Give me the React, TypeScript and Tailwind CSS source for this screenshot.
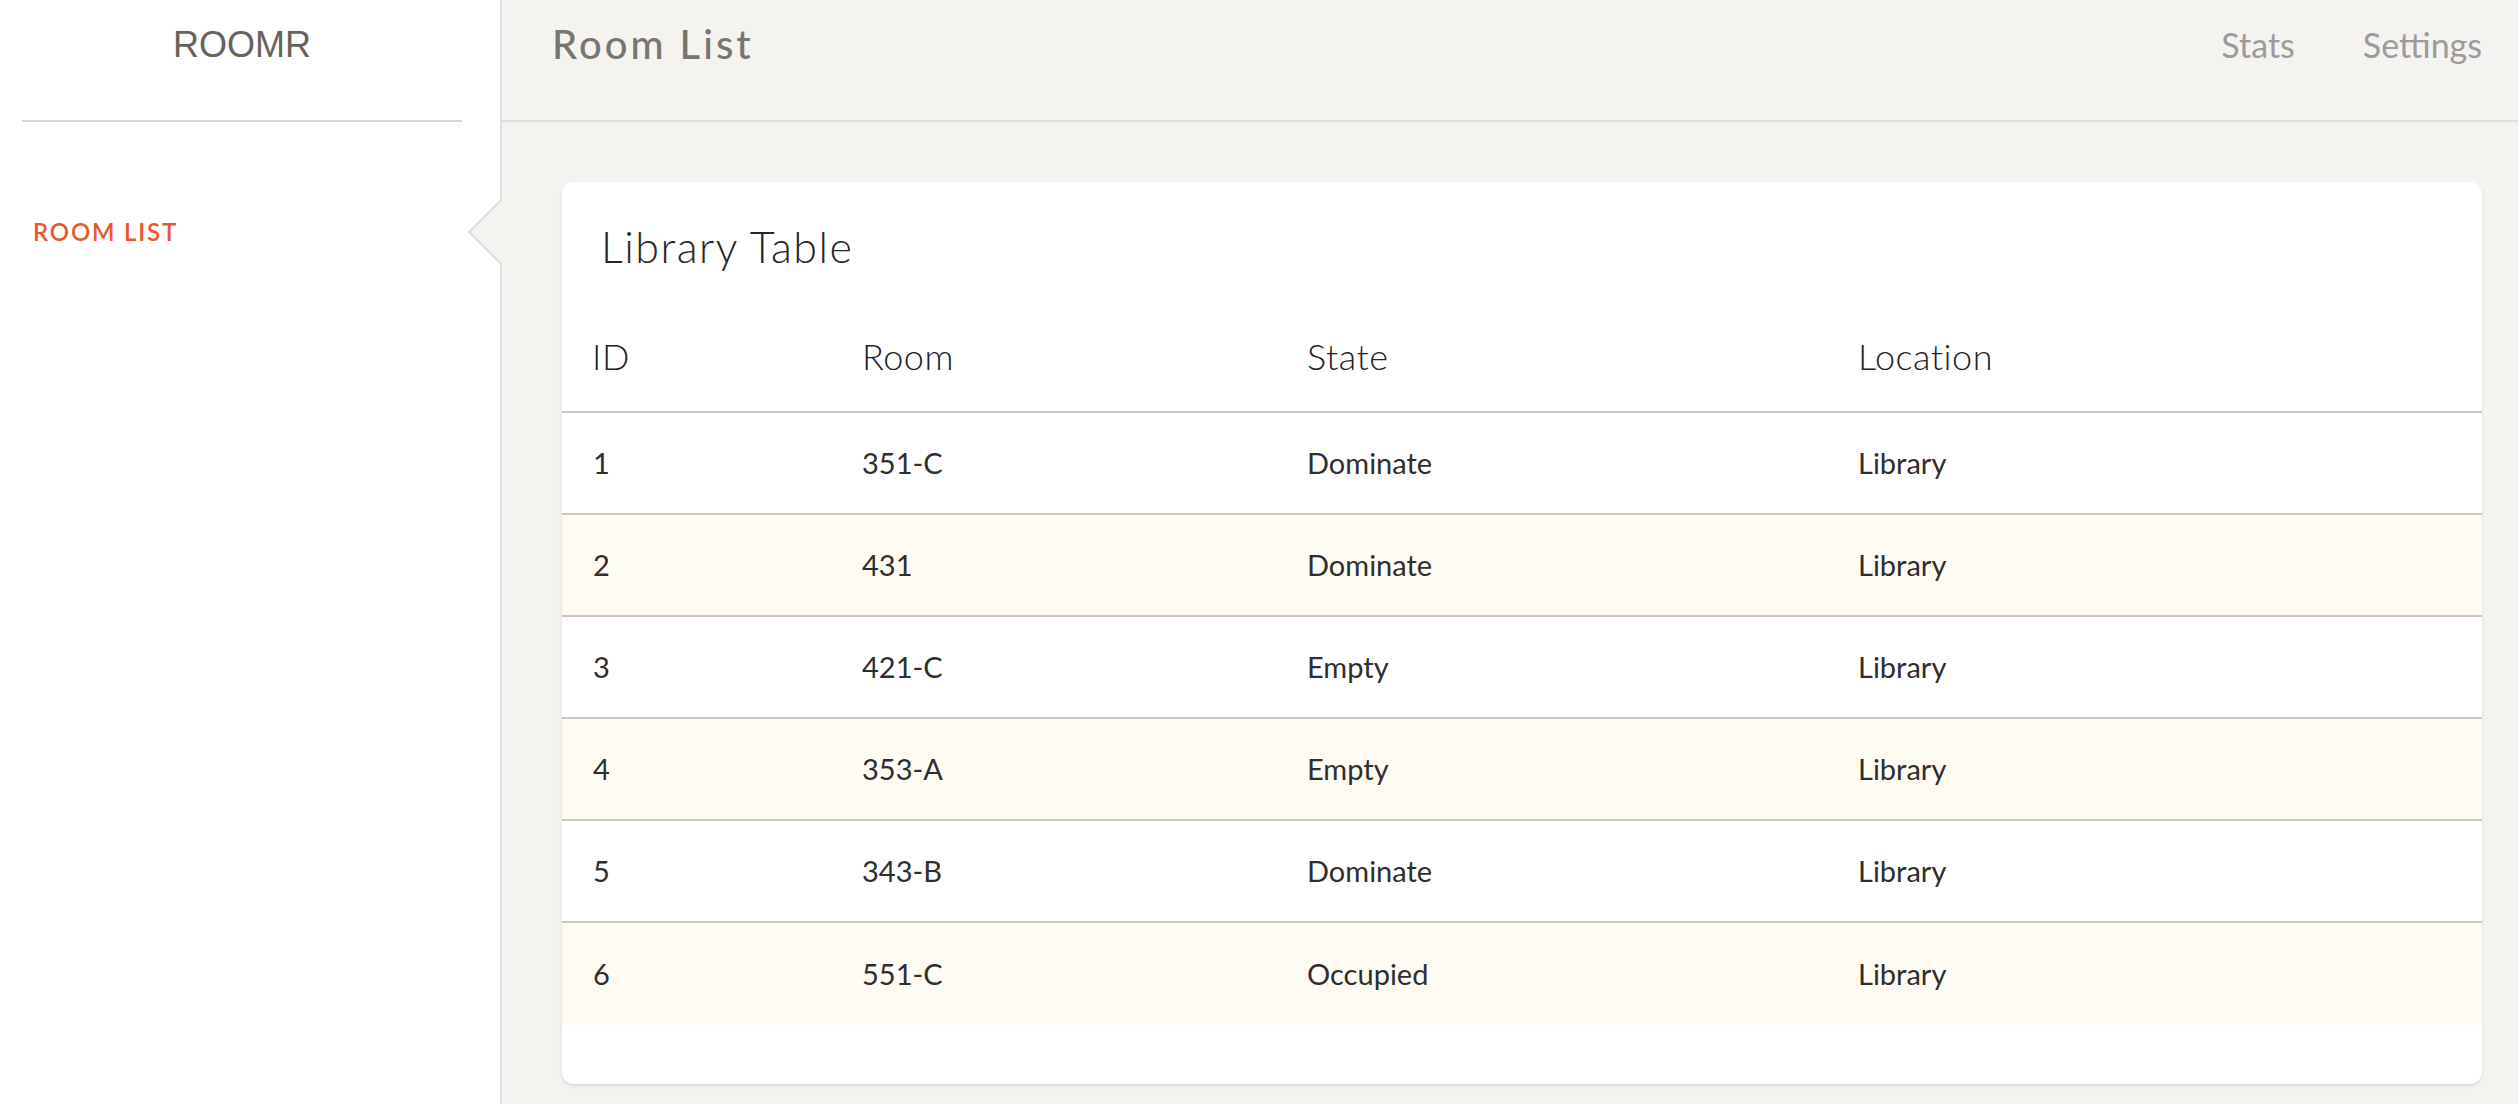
import React from "react";

const rooms = [
  { id: 1, room: "351-C", state: "Dominate", location: "Library" },
  { id: 2, room: "431", state: "Dominate", location: "Library" },
  { id: 3, room: "421-C", state: "Empty", location: "Library" },
  { id: 4, room: "353-A", state: "Empty", location: "Library" },
  { id: 5, room: "343-B", state: "Dominate", location: "Library" },
  { id: 6, room: "551-C", state: "Occupied", location: "Library" },
];

const cols = "grid grid-cols-[270px_445px_551px_1fr]";

export default function App() {
  return (
    <div className="flex min-h-screen h-[1104px] bg-[#f4f3f0] font-['Lato','Noto_Sans',sans-serif] overflow-hidden">
      {/* Sidebar */}
      <aside className="relative w-[502px] shrink-0 bg-white border-r-2 border-[#dedede] pl-[22px] pr-[38px]">
        <div className="h-[120px] flex items-center justify-center pb-[30px] text-[36px] font-['Liberation_Sans',sans-serif] text-[#66625c]">
          ROOMR
        </div>
        <div className="h-[2px] bg-[#d6d6d6]" />
        <nav className="pt-[96px]">
          <a className="block pl-[11px] text-[24px] leading-[28px] font-semibold tracking-[1.8px] text-[#e8572e]">
            ROOM LIST
          </a>
        </nav>
        {/* active notch */}
        <svg
          className="absolute left-[467px] top-[199px]"
          width="37"
          height="66"
          viewBox="0 0 37 66"
        >
          <polygon points="2,33 35,0 37,0 37,66 35,66" fill="#f4f3f0" />
          <polyline points="35,0 2,33 35,66" fill="none" stroke="#dcdcdc" strokeWidth="2" />
        </svg>
      </aside>

      {/* Main */}
      <main className="flex-1 flex flex-col">
        <header className="h-[122px] shrink-0 flex items-start justify-between border-b-2 border-[#dedede] pl-[50px] pr-[36px]">
          <h1 className="pt-[14px] text-[40px] font-medium tracking-[3px] text-[#78756f]">
            Room List
          </h1>
          <div className="flex gap-[68px] pt-[19px] text-[34px] text-[#9b9b9b]">
            <span>Stats</span>
            <span>Settings</span>
          </div>
        </header>

        <div className="pl-[60px] pr-[36px] pt-[60px]">
          <section className="bg-white rounded-[12px] shadow-[0_2px_3px_rgba(80,70,50,0.15)] pb-[59px]">
            <div className="h-[118px] flex items-center pt-[12px] pl-[39px] text-[43px] font-light tracking-[1.5px] text-[#262626]">
              Library Table
            </div>
            <div className={`${cols} h-[113px] items-center border-b-2 border-[#ccc7bb] text-[36px] font-light tracking-[0.5px] text-[#222]`}>
              <div className="pl-[30px]">ID</div>
              <div className="pl-[30px]">Room</div>
              <div className="pl-[30px]">State</div>
              <div className="pl-[30px]">Location</div>
            </div>
            {rooms.map((r, i) => (
              <div
                key={r.id}
                className={`${cols} h-[102px] items-center text-[29px] text-[#2e2e2e] ${
                  i % 2 === 1 ? "bg-[#fefbf3]" : "bg-white"
                } ${i < rooms.length - 1 ? "border-b-2 border-[#ccc7bb]" : ""}`}
              >
                <div className="pl-[31px]">{r.id}</div>
                <div className="pl-[30px]">{r.room}</div>
                <div className="pl-[30px]">{r.state}</div>
                <div className="pl-[30px]">{r.location}</div>
              </div>
            ))}
          </section>
        </div>
      </main>
    </div>
  );
}
